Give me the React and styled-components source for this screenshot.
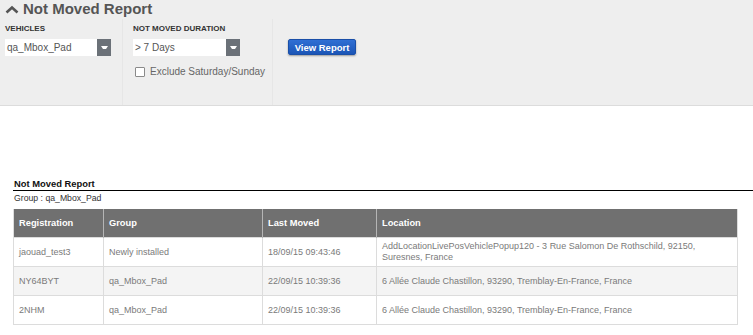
import React from "react";
import styled, { createGlobalStyle } from "styled-components";

const Global = createGlobalStyle`
  html, body { margin: 0; padding: 0; background: #fff; }
  body { font-family: "Liberation Sans", Arial, sans-serif; width: 753px; overflow: hidden; }
  * { box-sizing: border-box; }
`;

const Panel = styled.div`
  background: #eeeeee;
  height: 106px;
  border-bottom: 1px solid #dcdcdc;
  display: flex;
  flex-direction: column;
`;

const TitleRow = styled.div`
  height: 20px;
  display: flex;
  align-items: center;
  gap: 4px;
  padding-left: 5px;
  margin-top: -1px;
`;

const Title = styled.h1`
  margin: 0;
  font-size: 15px;
  font-weight: bold;
  color: #555;
  line-height: 18px;
`;

const Filters = styled.div`
  display: flex;
  flex: 1;
`;

const Column = styled.div`
  width: ${(p) => p.$w}px;
  padding: 4px 0 0 ${(p) => p.$pl}px;
  border-right: ${(p) => (p.$last ? "none" : "1px solid #e6e6e6")};
  display: flex;
  flex-direction: column;
`;

const Label = styled.div`
  font-size: 8px;
  font-weight: bold;
  color: #333;
  line-height: 10px;
  height: 10px;
  margin-top: 1px;
  margin-bottom: 5px;
`;

const Select = styled.div`
  width: ${(p) => p.$w}px;
  height: 17px;
  background: #fff;
  display: flex;
  align-items: center;
  justify-content: space-between;
  font-size: 10px;
  color: #555;
  padding-left: 2px;
`;

const Arrow = styled.div`
  width: 14px;
  height: 17px;
  background: #6b7178;
  display: flex;
  align-items: center;
  justify-content: center;
`;

const CheckRow = styled.label`
  display: flex;
  align-items: center;
  gap: 5px;
  margin-top: 10px;
  padding-left: 2px;
  font-size: 10px;
  color: #666;
`;

const Box = styled.span`
  width: 10px;
  height: 10px;
  border: 1px solid #8a8a8a;
  border-radius: 1px;
  background: #fff;
`;

const Button = styled.button`
  margin-top: 16px;
  width: 68px;
  height: 16px;
  padding: 0;
  border: 1px solid #1a4fa8;
  border-radius: 2px;
  background: linear-gradient(#2f6fd4, #1b55b6);
  color: #fff;
  font-family: "Liberation Sans", Arial, sans-serif;
  font-weight: bold;
  font-size: 9.5px;
  box-shadow: 0 1px 2px rgba(0, 0, 0, 0.35);
`;

const Report = styled.div`
  margin-top: 72px;
  padding-left: 13px;
`;

const ReportTitle = styled.div`
  font-size: 9.4px;
  font-weight: bold;
  color: #111;
  line-height: 11px;
  padding-left: 1px;
  padding-bottom: 1px;
  border-bottom: 1px solid #000;
`;

const GroupLine = styled.div`
  font-size: 8.7px;
  color: #333;
  line-height: 11px;
  padding: 2px 0 0 1px;
  margin-bottom: 5px;
`;

const Table = styled.table`
  width: 724px;
  border-collapse: collapse;
  table-layout: fixed;
  font-size: 9px;
`;

const Th = styled.th`
  background: #707070;
  color: #fff;
  font-weight: bold;
  font-size: 9.3px;
  text-align: left;
  height: 28px;
  padding: 0 5px;
  border-left: 1px solid #b5b5b5;
  border-right: 1px solid #b5b5b5;
  &:first-child { border-left-color: #ddd; }
  &:last-child { border-right-color: #ddd; }
`;

const Tr = styled.tr`
  background: ${(p) => (p.$alt ? "#f4f4f4" : "#fff")};
`;

const Td = styled.td`
  color: #7a7a7a;
  height: 29px;
  padding: 2px 5px 1px;
  line-height: 11px;
  border: 1px solid #dcdcdc;
  vertical-align: middle;
`;

const rows = [
  ["jaouad_test3", "Newly installed", "18/09/15 09:43:46", "AddLocationLivePosVehiclePopup120 - 3 Rue Salomon De Rothschild, 92150, Suresnes, France"],
  ["NY64BYT", "qa_Mbox_Pad", "22/09/15 10:39:36", "6 Allée Claude Chastillon, 93290, Tremblay-En-France, France"],
  ["2NHM", "qa_Mbox_Pad", "22/09/15 10:39:36", "6 Allée Claude Chastillon, 93290, Tremblay-En-France, France"],
];

const Caret = () => (
  <svg width="7" height="4" viewBox="0 0 7 4">
    <path d="M0 0 H7 L5 3 H2 Z" fill="#fff" />
  </svg>
);

export default function App() {
  return (
    <>
      <Global />
      <Panel>
        <TitleRow>
          <svg width="14" height="9" viewBox="0 0 14 9">
            <polyline points="1.5,7.5 7,2.5 12.5,7.5" fill="none" stroke="#555" strokeWidth="2.6" />
          </svg>
          <Title>Not Moved Report</Title>
        </TitleRow>
        <Filters>
          <Column $w={123} $pl={5}>
            <Label>VEHICLES</Label>
            <Select $w={106}>
              qa_Mbox_Pad
              <Arrow><Caret /></Arrow>
            </Select>
          </Column>
          <Column $w={150} $pl={10}>
            <Label>NOT MOVED DURATION</Label>
            <Select $w={107}>
              &gt; 7 Days
              <Arrow><Caret /></Arrow>
            </Select>
            <CheckRow>
              <Box />
              Exclude Saturday/Sunday
            </CheckRow>
          </Column>
          <Column $w={200} $pl={15} $last>
            <Button>View Report</Button>
          </Column>
        </Filters>
      </Panel>
      <Report>
        <ReportTitle>Not Moved Report</ReportTitle>
        <GroupLine>Group : qa_Mbox_Pad</GroupLine>
        <Table>
          <colgroup>
            <col style={{ width: 90 }} />
            <col style={{ width: 159 }} />
            <col style={{ width: 114 }} />
            <col style={{ width: 361 }} />
          </colgroup>
          <thead>
            <tr>
              <Th>Registration</Th>
              <Th>Group</Th>
              <Th>Last Moved</Th>
              <Th>Location</Th>
            </tr>
          </thead>
          <tbody>
            {rows.map((r, i) => (
              <Tr key={i} $alt={i % 2 === 1}>
                {r.map((c, j) => (
                  <Td key={j}>{c}</Td>
                ))}
              </Tr>
            ))}
          </tbody>
        </Table>
      </Report>
    </>
  );
}
